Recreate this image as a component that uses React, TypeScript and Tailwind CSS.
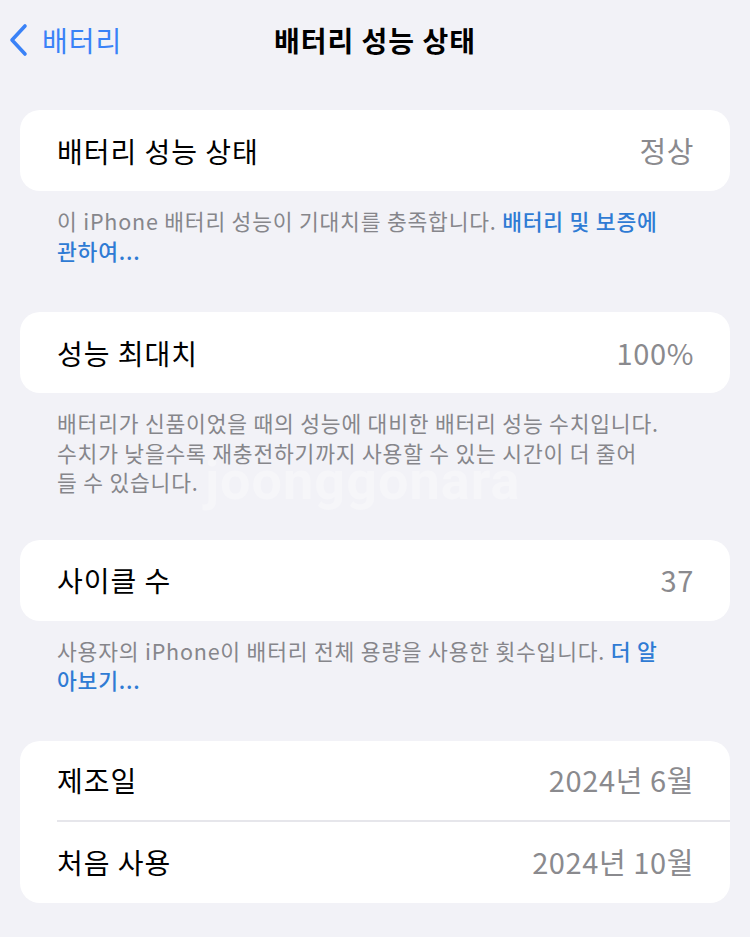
import React from 'react'

const font = { fontFamily: '"Noto Sans CJK KR", "Noto Sans", sans-serif' }

type Row = { label: string; value: string }

function Card({ rows }: { rows: Row[] }) {
  return (
    <div className="mx-[20px] rounded-[20px] bg-white">
      {rows.map((row, i) => (
        <div key={row.label} className="pl-[37px]">
          <div
            className={
              'flex h-[81px] items-center justify-between pr-[36px] ' +
              (i < rows.length - 1 ? 'border-b-2 border-[#e6e6eb]' : '')
            }
          >
            <span className="text-[28px] tracking-[1px] text-black">{row.label}</span>
            <span className="text-[29px] tracking-[0.6px] text-[#8a8a8e]">{row.value}</span>
          </div>
        </div>
      ))}
    </div>
  )
}

function Note({ children }: { children: React.ReactNode }) {
  return (
    <p className="px-[57px] pt-[15px] text-[21.5px] leading-[29.5px] tracking-[0.8px] text-[#86868b]">
      {children}
    </p>
  )
}

export default function App() {
  return (
    <div style={font} className="relative min-h-[937px] w-[750px] overflow-hidden bg-[#f2f2f7]">
      <div className="relative flex h-[80px] items-center">
        <div className="flex items-center pl-[8px] text-[#3a82f7]">
          <svg width="22" height="34" viewBox="0 0 22 34" fill="none">
            <path d="M17 3 L4 17 L17 31" stroke="currentColor" strokeWidth="3.6" strokeLinecap="round" strokeLinejoin="round" />
          </svg>
          <span className="ml-[12px] text-[28px] tracking-[1px]">배터리</span>
        </div>
        <div className="absolute inset-x-0 text-center text-[28px] font-bold tracking-[1px] text-black">
          배터리 성능 상태
        </div>
      </div>

      <div className="pt-[30px]">
        <Card rows={[{ label: '배터리 성능 상태', value: '정상' }]} />
        <Note>
          이 iPhone 배터리 성능이 기대치를 충족합니다.{' '}
          <span className="font-medium text-[#2f7bd4]">배터리 및 보증에</span>
          <br />
          <span className="font-medium text-[#2f7bd4]">관하여...</span>
        </Note>
      </div>

      <div className="pt-[47px]">
        <Card rows={[{ label: '성능 최대치', value: '100%' }]} />
        <Note>
          배터리가 신품이었을 때의 성능에 대비한 배터리 성능 수치입니다.
          <br />
          수치가 낮을수록 재충전하기까지 사용할 수 있는 시간이 더 줄어
          <br />
          들 수 있습니다.
        </Note>
      </div>

      <div className="pt-[43px]">
        <Card rows={[{ label: '사이클 수', value: '37' }]} />
        <Note>
          사용자의 iPhone이 배터리 전체 용량을 사용한 횟수입니다.{' '}
          <span className="font-medium text-[#2f7bd4]">더 알</span>
          <br />
          <span className="font-medium text-[#2f7bd4]">아보기...</span>
        </Note>
      </div>

      <div className="pt-[46px]">
        <Card
          rows={[
            { label: '제조일', value: '2024년 6월' },
            { label: '처음 사용', value: '2024년 10월' },
          ]}
        />
      </div>

      <div
        className="pointer-events-none absolute left-[205px] top-[440px] text-[54px] font-bold tracking-[1px] text-white/30"
        style={{ fontFamily: 'Roboto, sans-serif' }}
      >
        joonggonara
      </div>
    </div>
  )
}
